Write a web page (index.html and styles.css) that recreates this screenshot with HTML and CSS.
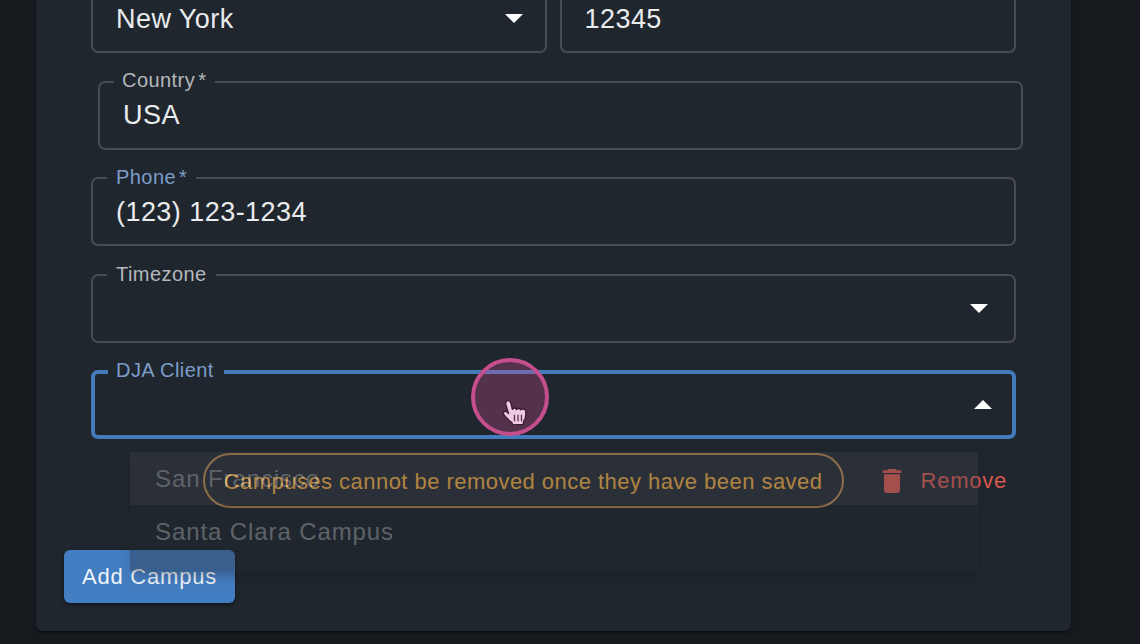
FILE: index.html
```html
<!DOCTYPE html>
<html lang="en">

<head>
    <meta charset="UTF-8">
    <meta name="viewport" content="width=device-width, initial-scale=1.0">
    <title>Campus</title>
    <link rel="stylesheet" href="styles.css">
</head>
<body>
    <div class="card">
        <div class="fields">
            <div class="row">
                <div class="field select state">
                    <span class="value">New York</span>
                    <i class="arrow"></i>
                </div>
                <div class="field">
                    <span class="value">12345</span>
                </div>
            </div>
            <div class="field country">
                <label>Country<sup>*</sup></label>
                <span class="value">USA</span>
            </div>
            <div class="field">
                <label class="blue">Phone<sup>*</sup></label>
                <span class="value">(123) 123-1234</span>
            </div>
            <div class="field select">
                <label>Timezone</label>
                <i class="arrow"></i>
            </div>
            <div class="field select focused">
                <label class="blue">DJA Client</label>
                <i class="arrow up"></i>
            </div>
        </div>
        <div class="remove-row">
            <div class="chip">Campuses cannot be removed once they have been saved</div>
            <div class="remove">
                <svg width="32" height="32" viewBox="0 0 24 24"><path fill="currentColor" d="M6 19c0 1.1.9 2 2 2h8c1.1 0 2-.9 2-2V7H6v12zM19 4h-3.5l-1-1h-5l-1 1H5v2h14V4z"/></svg>
                <span>Remove</span>
            </div>
        </div>
        <button class="add">Add Campus</button>
    </div>

    <!-- dropdown fading in over the form -->
    <ul class="menu">
        <li class="selected">San Francisco</li>
        <li>Santa Clara Campus</li>
    </ul>

    <div class="click">
        <svg class="hand" width="28" height="28" viewBox="0 0 26 26">
            <path fill="#efc9e2" stroke="#3a1a33" stroke-width="1.2" stroke-linejoin="round" d="M5.500 2.800C7 1.800 8.600 2.800 9 4.500L10.600 10.500C11.500 9 14 9.200 14.300 10.700C15.300 9.300 17.800 9.500 18.200 11C19.500 9.700 22.700 10.300 23 12.500C23.400 16.500 22.900 19.500 20.900 22L20.600 24.500L11 25L10 22.800C7.500 20.800 5.200 19 3 16C1 13 3.800 11.500 5.900 13.300L7 14.500L4.600 6.500C4.200 4.800 4.300 3.600 5.500 2.800Z"/>
            <path stroke="#5a3150" stroke-width="1.2" d="M12.500 15.500v6M15.800 15.500v6M19 15.500v6"/>
        </svg>
    </div>
</body>
</html>
```

FILE: styles.css
```css
* {
    margin: 0;
    padding: 0;
    box-sizing: border-box;
}
body {
    position: relative;
    width: 1140px;
    height: 644px;
    overflow: hidden;
    background: #161a1e;
    font-family: "Liberation Sans", Arial, sans-serif;
    color: #e9ebed;
}
.card {
    display: flow-root;
    width: 1035px;
    height: 647px;
    margin: -16px 0 0 36px;
    background: #20262e;
    border-radius: 7px;
    box-shadow: 0 2px 3px #0c0f15;
}
.fields {
    display: flex;
    flex-direction: column;
    gap: 27.5px;
    padding: 0 55px;
}
.row {
    display: flex;
    gap: 13px;
}
.row .field {
    flex: 1;
}
.field {
    position: relative;
    display: flex;
    align-items: center;
    height: 69px;
    padding: 0 23px;
    border: 2px solid #484b52;
    border-radius: 7px;
}
.field label {
    position: absolute;
    top: -14px;
    left: 14px;
    padding: 0 9px;
    background: #20262e;
    color: #b5b8bc;
    font-size: 20px;
    line-height: 24px;
    letter-spacing: 0.45px;
    white-space: nowrap;
}
.field label.blue {
    color: #7d9dc9;
}
.field sup {
    margin-left: 3px;
    font-size: 20px;
    line-height: 0;
    vertical-align: baseline;
}
.value {
    font-size: 27px;
    line-height: 32px;
    letter-spacing: 0.45px;
}
.country {
    left: 7px;
}
.field.country label {
    top: -15px;
    padding: 0 9px 0 8px;
}
.select {
    justify-content: space-between;
    padding-right: 26px;
}
.state {
    padding-right: 22px;
}
.arrow {
    margin-left: auto;
    border: 9px solid transparent;
    border-top-color: #fff;
    border-bottom-width: 0;
}
.arrow.up {
    border-top-width: 0;
    border-bottom: 9px solid #fff;
}
.focused {
    padding-right: 20px;
    border: 4px solid #447bbd;
}
.field.focused label {
    top: -16px;
    left: 13px;
    padding: 0 10px 0 8px;
}
.remove-row {
    display: flex;
    align-items: center;
    justify-content: flex-end;
    gap: 32px;
    margin-top: 14px;
    padding-right: 64px;
}
.chip {
    width: 641px;
    height: 55px;
    border: 2px solid #b5864a;
    border-radius: 28px;
    color: #eba93f;
    font-size: 22px;
    line-height: 53px;
    text-align: center;
    letter-spacing: 0.46px;
    white-space: nowrap;
}
.remove {
    display: flex;
    align-items: center;
    gap: 13px;
    color: #d9584f;
    font-size: 22px;
    letter-spacing: 0.75px;
}
.add {
    display: block;
    width: 171px;
    height: 53px;
    margin: 42px 0 0 28px;
    border: none;
    border-radius: 6px;
    background: #447ec2;
    box-shadow: 0 2px 4px #12161d;
    color: #f0f5fa;
    font-family: inherit;
    font-size: 22px;
    letter-spacing: 0.8px;
}
.menu {
    position: absolute;
    left: 130px;
    top: 452px;
    width: 848px;
    height: 119px;
    list-style: none;
    background: #22272e;
    box-shadow: 0 8px 12px -4px #181818;
    opacity: 0.35;
}
.menu li {
    height: 53px;
    padding-left: 25px;
    font-size: 24px;
    line-height: 54px;
    letter-spacing: 0.9px;
    color: #cfd2d6;
}
.menu .selected {
    background: #40424a;
}
.click {
    position: absolute;
    left: 471px;
    top: 358px;
    width: 78px;
    height: 78px;
    border: 4px solid #c54e8d;
    border-radius: 50%;
    background: rgba(197, 78, 141, 0.32);
}
.hand {
    position: absolute;
    left: 26px;
    top: 36px;
}
```
